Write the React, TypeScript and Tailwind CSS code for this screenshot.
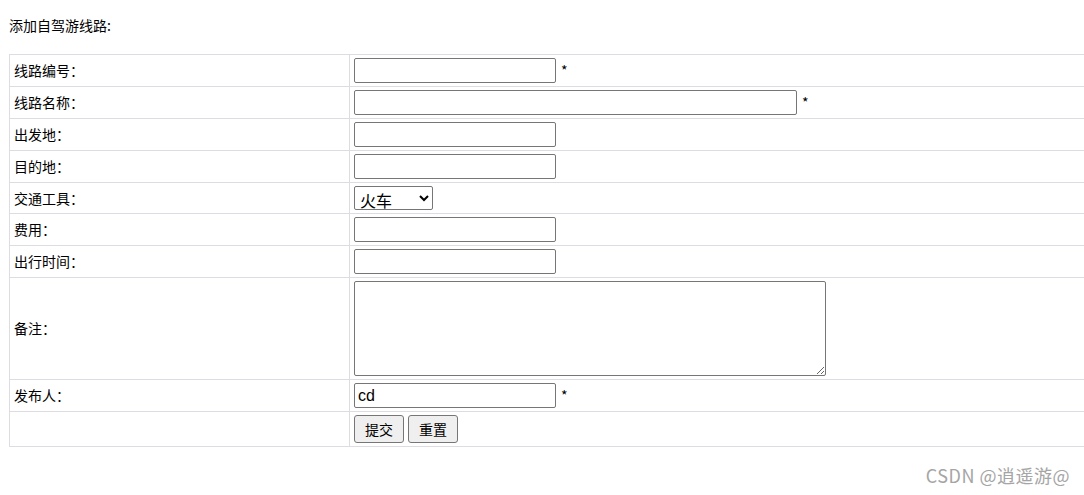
import { useState } from "react";

const cell = "border border-[#dcdce2] px-[4px] py-[3px] align-middle";
const field =
  "border border-[#767676] rounded-[2px] bg-white px-[3px] text-[16px] text-black outline-none font-['Liberation_Sans','Noto_Sans_CJK_SC',sans-serif]";

const App = () => {
  const [author, setAuthor] = useState("cd");
  const [vehicle, setVehicle] = useState("火车");

  const rows: { label: string; content: React.ReactNode; h: string }[] = [
    {
      label: "线路编号：",
      h: "h-[31px]",
      content: (
        <>
          <input className={`${field} w-[202px] h-[25px]`} />
          <span className="ml-[5px]">*</span>
        </>
      ),
    },
    {
      label: "线路名称：",
      h: "h-[31px]",
      content: (
        <>
          <input className={`${field} w-[443px] h-[25px]`} />
          <span className="ml-[5px]">*</span>
        </>
      ),
    },
    { label: "出发地：", h: "h-[31px]", content: <input className={`${field} w-[202px] h-[25px]`} /> },
    { label: "目的地：", h: "h-[31px]", content: <input className={`${field} w-[202px] h-[25px]`} /> },
    {
      label: "交通工具：",
      h: "h-[30px]",
      content: (
        <select
          value={vehicle}
          onChange={(e) => setVehicle(e.target.value)}
          className="border border-[#767676] rounded-[2px] bg-white text-[16px] text-black w-[79px] h-[24px] pl-[1px]"
        >
          <option>火车</option>
          <option>汽车</option>
          <option>飞机</option>
        </select>
      ),
    },
    { label: "费用：", h: "h-[31px]", content: <input className={`${field} w-[202px] h-[25px]`} /> },
    { label: "出行时间：", h: "h-[31px]", content: <input className={`${field} w-[202px] h-[25px]`} /> },
    {
      label: "备注：",
      h: "h-[101px]",
      content: <textarea className={`${field} block w-[472px] h-[95px] resize`} />,
    },
    {
      label: "发布人：",
      h: "h-[31px]",
      content: (
        <>
          <input
            value={author}
            onChange={(e) => setAuthor(e.target.value)}
            className={`${field} w-[202px] h-[25px]`}
          />
          <span className="ml-[5px]">*</span>
        </>
      ),
    },
  ];

  return (
    <div className="w-[1084px] h-[495px] overflow-hidden bg-white text-[14px] text-black font-['Microsoft_YaHei','Noto_Sans_CJK_SC',sans-serif] relative">
      <p className="pl-[9px] pt-[15px] leading-[20px]">添加自驾游线路:</p>
      <table className="ml-[9px] mt-[19px] w-[1100px] border-collapse">
        <tbody>
          {rows.map((r) => (
            <tr key={r.label} className={r.h}>
              <td className={`${cell} w-[340px]`}>{r.label}</td>
              <td className={`${cell} whitespace-nowrap`}>
                <div className="flex items-center">{r.content}</div>
              </td>
            </tr>
          ))}
          <tr className="h-[34px]">
            <td className={cell}></td>
            <td className={cell}>
              <div className="flex items-center gap-[4px]">
                <button
                  type="button"
                  className="w-[50px] h-[28px] border border-[#767676] rounded-[3px] bg-[#efefef] text-[14px]"
                >
                  提交
                </button>
                <button
                  type="button"
                  className="w-[50px] h-[28px] border border-[#767676] rounded-[3px] bg-[#efefef] text-[14px]"
                >
                  重置
                </button>
              </div>
            </td>
          </tr>
        </tbody>
      </table>
      <div className="absolute right-[14px] bottom-[6px] text-[18px] tracking-[0.5px] text-[#a5a5a5]">
        CSDN @逍遥游@
      </div>
    </div>
  );
};

export default App;
